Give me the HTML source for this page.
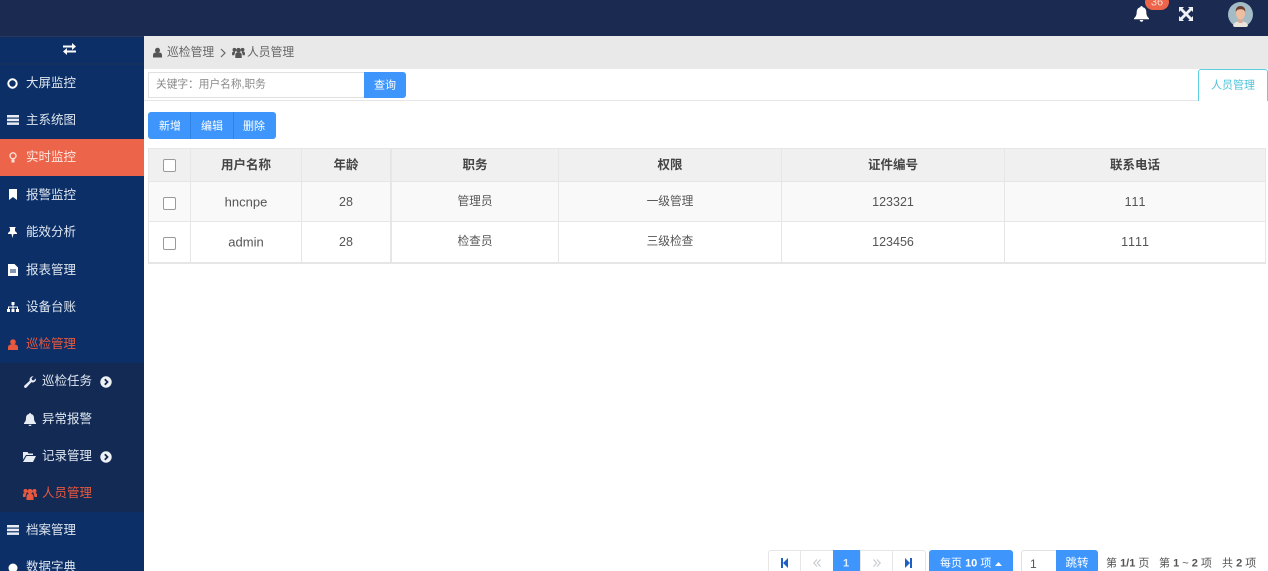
<!DOCTYPE html>
<html lang="zh"><head><meta charset="utf-8"><title>人员管理</title>
<style>
html,body{margin:0;padding:0;background:#fff;width:1268px;height:571px;overflow:hidden}
#w{position:absolute;left:0;top:0;width:1268px;height:571px;overflow:hidden;font-family:"Liberation Sans","Noto Sans CJK SC",sans-serif;color:#555;font-kerning:none}
.a{position:absolute}
.t{position:absolute;white-space:nowrap;transform:translateY(-50%);line-height:1}
.c{position:absolute;white-space:nowrap;transform:translate(-50%,-50%);line-height:1}
.m{font-size:12.5px;color:#dfe6f0;left:26px}
.s{font-size:12.5px;color:#dfe6f0;left:42px}
.r{color:#e8583f}
svg{position:absolute;display:block}
.cb{position:absolute;box-sizing:border-box;width:13px;height:13px;border:1px solid #9a9a9a;border-radius:2px;background:#fff}
.th{font-size:12.5px;font-weight:bold;color:#444}
.td{font-size:11.7px;color:#555}
.n{font-size:12.5px}
.v{position:absolute;width:1px;background:#e6e6e6}
.h{position:absolute;height:1px;background:#e6e6e6}
.btxt{font-size:11px;color:#fff}
</style></head><body><div id="w">
<div class="a" style="left:0;top:0;width:1268px;height:36px;background:#1a2a50"></div>
<div class="a" style="left:0;top:36px;width:144px;height:535px;background:#0b2f66"></div>
<div class="a" style="left:0;top:36px;width:144px;height:1px;background:#27395f"></div>
<div class="a" style="left:0;top:63px;width:144px;height:2px;background:#14305f"></div>
<div class="a" style="left:0;top:139px;width:144px;height:37px;background:#ec654a"></div>
<div class="a" style="left:0;top:363px;width:144px;height:149px;background:#122a54"></div>
<div class="a" style="left:144px;top:36px;width:1124px;height:33px;background:#e9e9e9"></div>

<svg style="left:62px;top:43px" width="15" height="12" viewBox="0 0 15 12" fill="#fff"><path d="M1 2.500h9V0l4 3.500-4 3.500V4.500H1zM14 7.500H5V5L1 8.500 5 12V9.500h9z"/></svg>

<svg style="left:7px;top:78px" width="11" height="11" viewBox="0 0 11 11"><circle cx="5.500" cy="5.500" r="4.200" fill="none" stroke="#fff" stroke-width="2"/></svg>
<div class="t m" style="top:83px">大屏监控</div>
<svg style="left:7px;top:115px" width="12" height="10" viewBox="0 0 12 10" fill="#e8edf5"><rect y="0" width="12" height="2.500"/><rect y="3.700" width="12" height="2.500"/><rect y="7.400" width="12" height="2.500"/></svg>
<div class="t m" style="top:120px">主系统图</div>
<svg style="left:9px;top:152px" width="8" height="11" viewBox="0 0 8 11"><circle cx="4" cy="3.800" r="3" fill="none" stroke="#fbe3dc" stroke-width="1.300"/><rect x="2.500" y="7.500" width="3" height="3" fill="#fbe3dc"/></svg>
<div class="t m" style="top:157px;color:#fde6df">实时监控</div>
<svg style="left:8px;top:189px" width="10" height="11" viewBox="0 0 10 11" fill="#fff"><path d="M1 0h8v11L5 8l-4 3z"/></svg>
<div class="t m" style="top:195px">报警监控</div>
<svg style="left:8px;top:227px" width="9" height="11" viewBox="0 0 9 11" fill="#fff"><path d="M1.500 0h6v1H7v3l2 2v1H5.500L4.500 11 3.500 7H0V6l2-2V1h-.5z"/></svg>
<div class="t m" style="top:232px">能效分析</div>
<svg style="left:8px;top:264px" width="10" height="12" viewBox="0 0 10 12"><path d="M0 0h6.500L10 3.500V12H0z" fill="#fff"/><path d="M2 6h6M2 8h6" stroke="#0b2f66" stroke-width="1"/></svg>
<div class="t m" style="top:270px">报表管理</div>
<svg style="left:7px;top:302px" width="12" height="10" viewBox="0 0 12 10" fill="#fff"><rect x="4.500" y="0" width="3" height="3"/><rect x="0" y="7" width="3" height="3"/><rect x="4.500" y="7" width="3" height="3"/><rect x="9" y="7" width="3" height="3"/><path d="M5.500 3h1v1.500H11V7h-1V5.500H6.500V7h-1V5.500H2V7H1V4.500h4.500z"/></svg>
<div class="t m" style="top:307px">设备台账</div>
<svg style="left:8px;top:339px" width="10" height="11" viewBox="0 0 10 11" fill="#e8583f"><circle cx="5" cy="3" r="2.800"/><path d="M0 11V8.500C0 6.500 1.500 5.500 3 5.500h4c1.500 0 3 1 3 3V11z"/></svg>
<div class="t m r" style="top:344px">巡检管理</div>

<svg style="left:24px;top:376px" width="12" height="12" viewBox="0 0 12 12" fill="#e8edf5"><path d="M12 3a3.500 3.500 0 0 1-4.700 3.300L2.500 11.500a1 1 0 0 1-2-2l5.200-4.800A3.500 3.500 0 0 1 9.500.3L7.500 2.300 8 4l1.700.5 2-2c.2.200.3.300.3.500z"/></svg>
<div class="t s" style="top:381px">巡检任务</div>
<svg style="left:100px;top:376px" width="12" height="12" viewBox="0 0 12 12"><circle cx="6" cy="6" r="5.700" fill="#eef1f6"/><path d="M4.800 3.200 7.500 6 4.800 8.800" fill="none" stroke="#122a54" stroke-width="1.800"/></svg>
<svg style="left:24px;top:413px" width="12" height="13" viewBox="0 0 12 13" fill="#e8edf5"><path d="M6 0c.6 0 1 .4 1 1 2 .4 3 2 3 4 0 3 1 4 2 5v1H0v-1c1-1 2-2 2-5 0-2 1-3.600 3-4 0-.6.400-1 1-1z"/><path d="M4.500 11.800a1.500 1.200 0 0 0 3 0z"/></svg>
<div class="t s" style="top:419px">异常报警</div>
<svg style="left:23px;top:451px" width="13" height="11" viewBox="0 0 13 11" fill="#e8edf5"><path d="M0 1h4.500l1 1.500H10V4H3L0 8.500z"/><path d="M3.500 5H13l-3 6H0z"/></svg>
<div class="t s" style="top:456px">记录管理</div>
<svg style="left:100px;top:451px" width="12" height="12" viewBox="0 0 12 12"><circle cx="6" cy="6" r="5.700" fill="#eef1f6"/><path d="M4.800 3.200 7.500 6 4.800 8.800" fill="none" stroke="#122a54" stroke-width="1.800"/></svg>
<svg style="left:23px;top:488px" width="14" height="12" viewBox="0 0 14 12" fill="#e8583f"><circle cx="7" cy="3.500" r="2.600"/><circle cx="2.500" cy="3" r="2"/><circle cx="11.500" cy="3" r="2"/><path d="M3.500 12V8.500c0-1.500 1-2.500 2-2.500h3c1 0 2 1 2 2.500V12z"/><path d="M0 9V6.500C0 5.500.8 5 1.500 5h2L2.500 8.500V9zM14 9V6.500C14 5.500 13.200 5 12.500 5h-2l1 3.500V9z"/></svg>
<div class="t s r" style="top:493px">人员管理</div>

<svg style="left:7px;top:525px" width="12" height="10" viewBox="0 0 12 10" fill="#e8edf5"><rect y="0" width="12" height="2.500"/><rect y="3.700" width="12" height="2.500"/><rect y="7.400" width="12" height="2.500"/></svg>
<div class="t m" style="top:530px">档案管理</div>
<svg style="left:7px;top:562px" width="12" height="9" viewBox="0 0 12 9"><circle cx="6" cy="6" r="4.500" fill="#fff"/></svg>
<div class="t m" style="top:567px">数据字典</div>

<!-- top right -->
<svg style="left:1134px;top:6px" width="15" height="16" viewBox="0 0 15 16" fill="#fff"><path d="M7.500 0c.7 0 1.200.5 1.200 1.200C11 1.700 12.300 3.500 12.300 6c0 3.500 1.200 5 2.700 6.200v1H0v-1C1.500 11 2.700 9.500 2.700 6c0-2.500 1.300-4.300 3.600-4.800C6.300.5 6.800 0 7.500 0z"/><path d="M5.800 14h3.400a1.700 1.700 0 0 1-3.400 0z"/></svg>
<div class="a" style="left:1145px;top:-6px;width:24px;height:16px;background:#ec654a;border-radius:8px"></div>
<div class="c" style="left:1157px;top:3px;font-size:11px;color:#fbdcd4">36</div>
<svg style="left:1179px;top:7px" width="14" height="14" viewBox="0 0 14 14" fill="#eef2f8"><path d="M0 0h5L3.500 1.500 7 5 10.500 1.500 9 0h5v5l-1.500-1.500L9 7l3.500 3.500L14 9v5H9l1.500-1.500L7 9l-3.500 3.500L5 14H0V9l1.500 1.500L5 7 1.500 3.500 0 5z"/></svg>
<svg style="left:1228px;top:2px" width="25" height="25" viewBox="0 0 25 25"><circle cx="12.500" cy="12.500" r="12.500" fill="#a3bcc6"/><path d="M5 24c.5-3.500 3-4.500 7.500-4.500S19.500 20.500 20 24a12.500 12.500 0 0 1-15 0z" fill="#e9e4dc"/><rect x="10.500" y="16" width="4" height="5" fill="#e2a88c"/><ellipse cx="12.500" cy="11.500" rx="4.500" ry="6" fill="#efbd9f"/><path d="M7.800 10c-.5-4 2-6 4.700-6s5.200 2 4.700 6c-.8-2-2-2.800-4.700-2.800S8.600 8 7.800 10z" fill="#6a4130"/></svg>

<!-- breadcrumb -->
<svg style="left:153px;top:47px" width="9" height="11" viewBox="0 0 10 11" fill="#555"><circle cx="5" cy="3" r="2.800"/><path d="M0 11V8.500C0 6.500 1.500 5.500 3 5.500h4c1.500 0 3 1 3 3V11z"/></svg>
<div class="t" style="left:167px;top:53px;font-size:11.8px;color:#666">巡检管理</div>
<svg style="left:220px;top:48px" width="6" height="10" viewBox="0 0 6 10"><path d="M1 1l4 4-4 4" fill="none" stroke="#666" stroke-width="1.200"/></svg>
<svg style="left:232px;top:47px" width="13" height="11" viewBox="0 0 14 12" fill="#555"><circle cx="7" cy="3.500" r="2.600"/><circle cx="2.500" cy="3" r="2"/><circle cx="11.500" cy="3" r="2"/><path d="M3.500 12V8.500c0-1.500 1-2.500 2-2.500h3c1 0 2 1 2 2.500V12z"/><path d="M0 9V6.500C0 5.500.8 5 1.500 5h2L2.500 8.500V9zM14 9V6.500C14 5.500 13.200 5 12.500 5h-2l1 3.500V9z"/></svg>
<div class="t" style="left:247px;top:53px;font-size:11.8px;color:#666">人员管理</div>

<!-- toolbar -->
<div class="a" style="left:144px;top:100px;width:1124px;height:1px;background:#e6e6e6"></div>
<div class="a" style="box-sizing:border-box;left:148px;top:72px;width:217px;height:26px;border:1px solid #e0e0e0;background:#fff"></div>
<div class="t" style="left:156px;top:85px;font-size:10.7px;color:#888">关键字：用户名称,职务</div>
<div class="a" style="left:364px;top:72px;width:42px;height:26px;background:#3e96fc;border-radius:0 3px 3px 0"></div>
<div class="c btxt" style="left:385px;top:86px">查询</div>
<div class="a" style="box-sizing:border-box;left:1198px;top:69px;width:70px;height:32px;border:1px solid #5cd0e2;border-bottom:0;border-radius:3px 3px 0 0;background:#fff"></div>
<div class="c" style="left:1233px;top:86px;font-size:11px;color:#4fc3d9">人员管理</div>

<!-- buttons -->
<div class="a" style="left:148px;top:112px;width:128px;height:27px;background:#3e96fc;border-radius:3px"></div>
<div class="a" style="left:190px;top:112px;width:1px;height:27px;background:#2f83e6"></div>
<div class="a" style="left:233px;top:112px;width:1px;height:27px;background:#2f83e6"></div>
<div class="c btxt" style="left:170px;top:127px">新增</div>
<div class="c btxt" style="left:212px;top:127px">编辑</div>
<div class="c btxt" style="left:254px;top:127px">删除</div>

<!-- table -->
<div class="a" style="left:148px;top:148px;width:1118px;height:34px;background:#f0f0f0"></div>
<div class="a" style="left:148px;top:182px;width:1118px;height:39px;background:#f9f9f9"></div>
<div class="h" style="left:148px;top:148px;width:1118px"></div>
<div class="h" style="left:148px;top:181px;width:1118px"></div>
<div class="h" style="left:148px;top:221px;width:1118px"></div>
<div class="h" style="left:148px;top:262px;width:1118px;height:2px"></div>
<div class="v" style="left:148px;top:148px;height:115px"></div>
<div class="v" style="left:190px;top:148px;height:115px"></div>
<div class="v" style="left:301px;top:148px;height:115px"></div>
<div class="v" style="left:390px;top:148px;height:115px;width:2px"></div>
<div class="v" style="left:558px;top:148px;height:115px"></div>
<div class="v" style="left:781px;top:148px;height:115px"></div>
<div class="v" style="left:1004px;top:148px;height:115px"></div>
<div class="v" style="left:1265px;top:148px;height:115px"></div>

<div class="cb" style="left:163px;top:159px"></div>
<div class="c th" style="left:246px;top:165px">用户名称</div>
<div class="c th" style="left:346px;top:165px">年龄</div>
<div class="c th" style="left:475px;top:165px">职务</div>
<div class="c th" style="left:670px;top:165px">权限</div>
<div class="c th" style="left:893px;top:165px">证件编号</div>
<div class="c th" style="left:1135px;top:165px">联系电话</div>

<div class="cb" style="left:163px;top:197px"></div>
<div class="c td n" style="left:246px;top:202px;font-size:13px">hncnpe</div>
<div class="c td n" style="left:346px;top:202px">28</div>
<div class="c td" style="left:475px;top:202px">管理员</div>
<div class="c td" style="left:670px;top:202px">一级管理</div>
<div class="c td n" style="left:893px;top:202px">123321</div>
<div class="c td n" style="left:1135px;top:202px">111</div>

<div class="cb" style="left:163px;top:237px"></div>
<div class="c td n" style="left:246px;top:242px;font-size:13px">admin</div>
<div class="c td n" style="left:346px;top:242px">28</div>
<div class="c td" style="left:475px;top:242px">检查员</div>
<div class="c td" style="left:670px;top:242px">三级检查</div>
<div class="c td n" style="left:893px;top:242px">123456</div>
<div class="c td n" style="left:1135px;top:242px">1111</div>

<!-- pagination -->
<div class="a" style="box-sizing:border-box;left:768px;top:550px;width:158px;height:30px;border:1px solid #e6e6e6;border-radius:3px;background:#fff"></div>
<div class="v" style="left:800px;top:550px;height:21px"></div>
<div class="v" style="left:892px;top:550px;height:21px"></div>
<div class="v" style="left:860px;top:550px;height:21px"></div>
<div class="a" style="left:833px;top:550px;width:27px;height:21px;background:#3e96fc"></div>
<div class="c" style="left:846px;top:564px;font-size:11px;font-weight:bold;color:#dfeeff">1</div>
<svg style="left:781px;top:558px" width="7" height="10" viewBox="0 0 7 10" fill="#1f5fc4"><rect width="2" height="10"/><path d="M7 0v10L2 5z"/></svg>
<svg style="left:813px;top:559px" width="8" height="8" viewBox="0 0 8 8"><path d="M4 .5.800 4 4 7.500M7.500.5 4.300 4l3.200 3.500" fill="none" stroke="#c4c9d0" stroke-width="1.100"/></svg>
<svg style="left:873px;top:559px" width="8" height="8" viewBox="0 0 8 8"><path d="M4 .5 7.200 4 4 7.500M.5.500 3.700 4 .5 7.500" fill="none" stroke="#c4c9d0" stroke-width="1.100"/></svg>
<svg style="left:905px;top:558px" width="7" height="10" viewBox="0 0 7 10" fill="#1f5fc4"><path d="M0 0v10l5-5z"/><rect x="5" width="2" height="10"/></svg>
<div class="a" style="left:929px;top:550px;width:84px;height:30px;background:#3e96fc;border-radius:3px"></div>
<div class="t" style="left:940px;top:564px;font-size:11px;color:#fff">每页 <b>10</b> 项</div>
<svg style="left:995px;top:562px" width="7" height="4" viewBox="0 0 7 4" fill="#fff"><path d="M0 4 3.500 0 7 4z"/></svg>
<div class="a" style="box-sizing:border-box;left:1021px;top:550px;width:36px;height:30px;border:1px solid #e0e0e0;border-radius:3px 0 0 3px;background:#fff"></div>
<div class="t" style="left:1030px;top:564px;font-size:12px;color:#555">1</div>
<div class="a" style="left:1056px;top:550px;width:42px;height:30px;background:#3e96fc;border-radius:0 3px 3px 0"></div>
<div class="c" style="left:1077px;top:564px;font-size:11.5px;color:#fff">跳转</div>
<div class="t" style="left:1106px;top:564px;font-size:11px;color:#555">第 <b>1/1</b> 页</div>
<div class="t" style="left:1159px;top:564px;font-size:11px;color:#555">第 <b>1</b> ~ <b>2</b> 项</div>
<div class="t" style="left:1222px;top:564px;font-size:11px;color:#555">共 <b>2</b> 项</div>
</div></body></html>
